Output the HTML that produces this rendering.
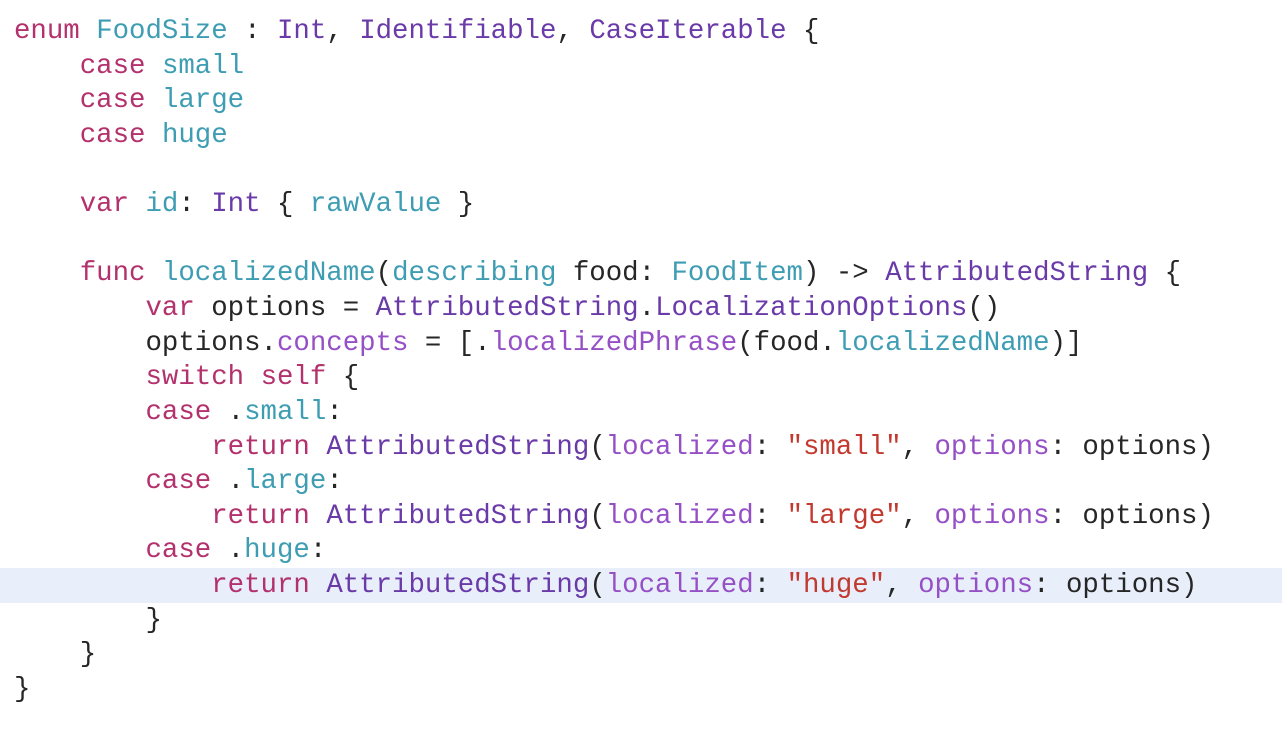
<!DOCTYPE html><html><head><style>
html,body{margin:0;padding:0;background:#fff;width:1282px;height:733px;overflow:hidden}
.hl{position:absolute;left:0;top:568px;width:1282px;height:35px;background:#e8effb}
pre{position:absolute;left:14px;top:15px;margin:0;font-family:"Liberation Mono",monospace;font-size:27.4px;line-height:34.63px;color:#262626;letter-spacing:0}
.k{color:#b3316c}.c{color:#3e9db3}.t{color:#6a3aa8}.p{color:#9650c6}.s{color:#c2392f}
</style></head><body><div class="hl"></div><pre><span class="k">enum</span> <span class="c">FoodSize</span> : <span class="t">Int</span>, <span class="t">Identifiable</span>, <span class="t">CaseIterable</span> {
    <span class="k">case</span> <span class="c">small</span>
    <span class="k">case</span> <span class="c">large</span>
    <span class="k">case</span> <span class="c">huge</span>

    <span class="k">var</span> <span class="c">id</span>: <span class="t">Int</span> { <span class="c">rawValue</span> }

    <span class="k">func</span> <span class="c">localizedName</span>(<span class="c">describing</span> food: <span class="c">FoodItem</span>) -&gt; <span class="t">AttributedString</span> {
        <span class="k">var</span> options = <span class="t">AttributedString</span>.<span class="t">LocalizationOptions</span>()
        options.<span class="p">concepts</span> = [.<span class="p">localizedPhrase</span>(food.<span class="c">localizedName</span>)]
        <span class="k">switch</span> <span class="k">self</span> {
        <span class="k">case</span> .<span class="c">small</span>:
            <span class="k">return</span> <span class="t">AttributedString</span>(<span class="p">localized</span>: <span class="s">"small"</span>, <span class="p">options</span>: options)
        <span class="k">case</span> .<span class="c">large</span>:
            <span class="k">return</span> <span class="t">AttributedString</span>(<span class="p">localized</span>: <span class="s">"large"</span>, <span class="p">options</span>: options)
        <span class="k">case</span> .<span class="c">huge</span>:
            <span class="k">return</span> <span class="t">AttributedString</span>(<span class="p">localized</span>: <span class="s">"huge"</span>, <span class="p">options</span>: options)
        }
    }
}</pre></body></html>
